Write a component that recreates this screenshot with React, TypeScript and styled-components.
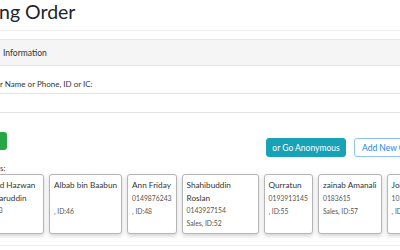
import styled, { createGlobalStyle } from "styled-components";

type Customer = {
  name: string;
  phone: string;
  note: string;
};

const customers: Customer[] = [
  { name: "Mohd Hazwan Kamaruddin", phone: "01993", note: "" },
  { name: "Albab bin Baabun", phone: "", note: ", ID:46" },
  { name: "Ann Friday", phone: "0149876243", note: ", ID:48" },
  { name: "Shahibuddin Roslan", phone: "0143927154", note: "Sales, ID:52" },
  { name: "Qurratun", phone: "0193913145", note: ", ID:55" },
  { name: "zainab Amanali", phone: "0183615", note: "Sales, ID:57" },
  { name: "Johari", phone: "1029384756", note: ", ID:60" },
];

const GlobalStyle = createGlobalStyle`
  html, body {
    margin: 0;
    padding: 0;
    background: #ffffff;
    overflow: hidden;
  }
  body {
    font-family: Lato, "Open Sans", sans-serif;
    color: #212529;
  }
`;

const App = () => {
  return (
    <>
      <GlobalStyle />
      <Page>
        <Title>ng Order</Title>
        <Panel>
          <PanelHeader>Information</PanelHeader>
          <PanelBody>
            <FieldLabel>r Name or Phone, ID or IC:</FieldLabel>
            <SearchInput type="text" />
            <ActionRow>
              <SearchButton>Search</SearchButton>
              <RightActions>
                <AnonButton>or Go Anonymous</AnonButton>
                <AddButton>Add New Customer</AddButton>
              </RightActions>
            </ActionRow>
            <RecentLabel>s:</RecentLabel>
            <CardRow>
              {customers.map((c, i) => (
                <CustomerCard key={c.name} $clipped={i === 0}>
                  <CardName>{c.name}</CardName>
                  <CardLine>{c.phone || "\u00a0"}</CardLine>
                  <CardLine>{c.note}</CardLine>
                </CustomerCard>
              ))}
            </CardRow>
          </PanelBody>
        </Panel>
      </Page>
    </>
  );
};

const Page = styled.div`
  width: 400px;
  height: 250px;
  overflow: hidden;
`;

const Title = styled.h2`
  margin: -1px 0 0 -1px;
  height: 31px;
  font-size: 19.5px;
  line-height: 26px;
  font-weight: 400;
  color: #212529;
  border-bottom: 1px solid #ededed;
`;

const Panel = styled.div`
  margin-top: 8px;
  border-top: 1px solid #e6e6e6;
`;

const PanelHeader = styled.div`
  height: 25px;
  padding-left: 3px;
  display: flex;
  align-items: center;
  font-size: 8.5px;
  color: #333;
  background: #f5f5f5;
  border-bottom: 1px solid #e6e6e6;
`;

const PanelBody = styled.div`
  padding-top: 11px;
  border-bottom: 1px solid #ededed;
`;

const FieldLabel = styled.div`
  font-size: 8px;
  line-height: 14px;
  color: #333;
`;

const SearchInput = styled.input`
  display: block;
  box-sizing: border-box;
  width: 100%;
  height: 20px;
  margin-top: 2px;
  border: none;
  border-top: 1px solid #e3e3e3;
  border-bottom: 1px solid #e3e3e3;
  outline: none;
`;

const ActionRow = styled.div`
  display: flex;
  align-items: flex-start;
  margin-top: 19px;
`;

const SearchButton = styled.button`
  box-sizing: border-box;
  flex: 0 0 auto;
  width: 58px;
  height: 18px;
  margin-left: -51px;
  border: none;
  border-radius: 3px;
  background: #28a745;
  color: #fff;
  font-size: 8.5px;
`;

const RightActions = styled.div`
  display: flex;
  flex: 0 0 auto;
  gap: 8px;
  margin-top: 6px;
  margin-left: 259px;
`;

const ButtonBase = styled.button`
  box-sizing: border-box;
  height: 19px;
  border-radius: 3px;
  font-family: Lato, "Open Sans", sans-serif;
  font-size: 8.5px;
  white-space: nowrap;
`;

const AnonButton = styled(ButtonBase)`
  width: 80px;
  padding: 0;
  border: 1px solid #17a2b8;
  background: #17a2b8;
  color: #fff;
`;

const AddButton = styled(ButtonBase)`
  padding: 0 7px;
  border: 1px solid #8fc1f7;
  background: #fff;
  color: #1a82f0;
`;

const RecentLabel = styled.div`
  margin-top: 6px;
  font-size: 8px;
  line-height: 10px;
  color: #444;
`;

const CardRow = styled.div`
  display: flex;
  gap: 5px;
  margin-top: 1px;
  padding-bottom: 11px;
`;

const CustomerCard = styled.div<{ $clipped: boolean }>`
  box-sizing: border-box;
  flex: 0 0 auto;
  max-width: ${(p) => (p.$clipped ? "66px" : "77px")};
  height: 60px;
  padding: 4px 4px 0 4px;
  margin-left: ${(p) => (p.$clipped ? "-22px" : "0")};
  border: 1px solid #b5b5b5;
  border-radius: 3px;
  box-shadow: 0 2px 4px rgba(0, 0, 0, 0.18);
  background: #fff;
`;

const CardName = styled.div`
  font-size: 8.2px;
  line-height: 12.5px;
  color: #333;
`;

const CardLine = styled.div`
  font-size: 6.8px;
  line-height: 13px;
  color: #555;
  white-space: nowrap;
`;

export default App;
